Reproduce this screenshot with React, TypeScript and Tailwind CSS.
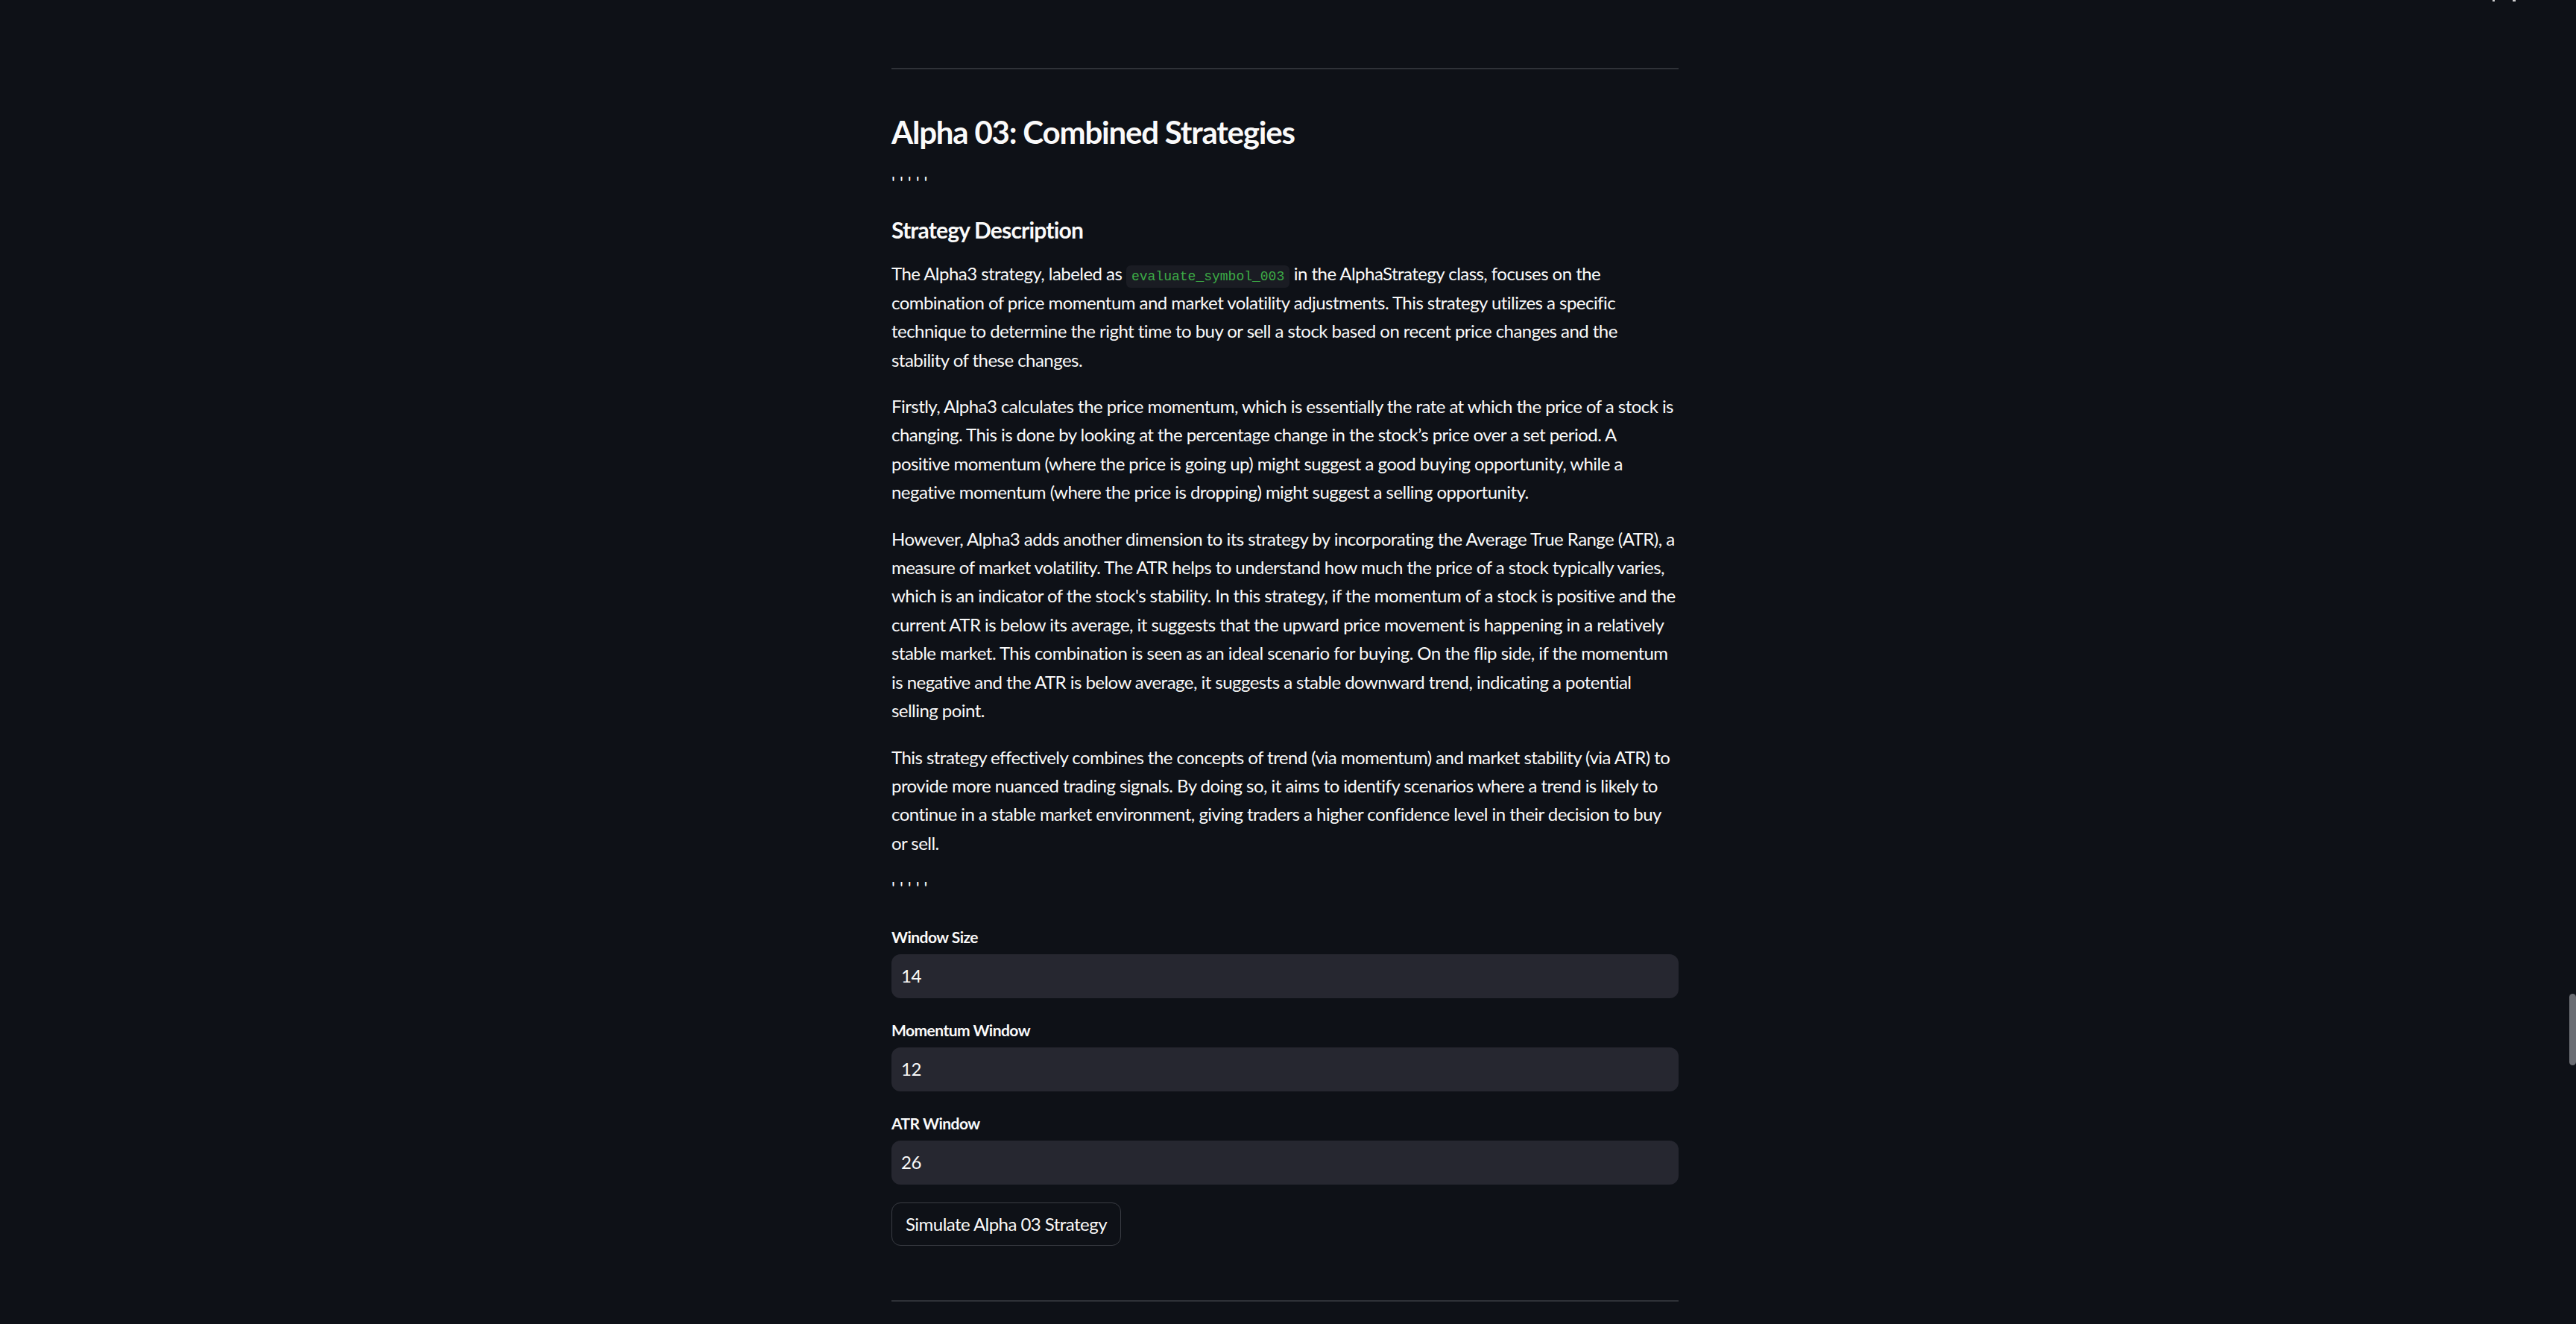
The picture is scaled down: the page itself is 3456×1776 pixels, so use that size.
import React from "react";

const body = "font-['Lato','Noto_Sans',sans-serif] tracking-[-0.54px]";

const Para = ({ lines, className = "" }: { lines: React.ReactNode[]; className?: string }) => (
  <p className={`text-[24px] leading-[38.4px] text-[#fafafa] whitespace-nowrap ${className}`}>
    {lines.map((l, i) => (
      <span key={i} className="block">
        {l}
      </span>
    ))}
  </p>
);

const NumberField = ({ label, value }: { label: string; value: string }) => (
  <div className="flex flex-col">
    <label className="text-[21px] leading-[30px] font-bold text-[#fafafa] mb-[8px]">{label}</label>
    <div className="h-[59px] rounded-[12px] bg-[#262730] flex items-center px-[13px] text-[24px] text-[#fafafa]">
      {value}
    </div>
  </div>
);

// the stray quote marks left in the markdown
const Ticks = () => (
  <p className="text-[24px] leading-[38.4px] text-[#fafafa] tracking-[6px]">'''''</p>
);

export default function App() {
  return (
    <div className={`relative min-h-screen w-full bg-[#0e1117] ${body}`}>
      {/* bits of the toolbar icon cut off at the top */}
      <div className="absolute top-0 left-[3344px] w-[3px] h-[2px] bg-white/80" />
      <div className="absolute top-0 left-[3371px] w-[4px] h-[2px] bg-white/80" />

      {/* scrollbar thumb */}
      <div className="absolute right-0 top-[1333px] w-[9px] h-[96px] rounded-full bg-[#6b6d73]" />

      <div className="flex justify-center pr-[8px]">
        <main className="w-[1056px] flex flex-col">
          <div className="mt-[91px] h-[2px] bg-[#2f3238]" />

          <h2 className="mt-[59px] text-[42px] leading-[50px] font-bold tracking-[-1.2px] text-[#fafafa]">
            Alpha 03: Combined Strategies
          </h2>

          <div className="mt-[24px]">
            <Ticks />
          </div>

          <h4 className="mt-[24px] text-[30px] leading-[40px] font-bold tracking-[-0.8px] text-[#fafafa]">
            Strategy Description
          </h4>

          <div className="mt-[20px] flex flex-col gap-[24px]">
            <Para
              lines={[
                <>
                  The Alpha3 strategy, labeled as{" "}
                  <code className="font-['Liberation_Mono',monospace] text-[18px] leading-[20px] tracking-normal text-[#3dab46] bg-[#1a1c23] rounded-[6px] px-[7px] py-[5px]">
                    evaluate_symbol_003
                  </code>{" "}
                  in the AlphaStrategy class, focuses on the
                </>,
                "combination of price momentum and market volatility adjustments. This strategy utilizes a specific",
                "technique to determine the right time to buy or sell a stock based on recent price changes and the",
                "stability of these changes.",
              ]}
            />
            <Para
              lines={[
                "Firstly, Alpha3 calculates the price momentum, which is essentially the rate at which the price of a stock is",
                "changing. This is done by looking at the percentage change in the stock\u2019s price over a set period. A",
                "positive momentum (where the price is going up) might suggest a good buying opportunity, while a",
                "negative momentum (where the price is dropping) might suggest a selling opportunity.",
              ]}
            />
            <Para
              lines={[
                "However, Alpha3 adds another dimension to its strategy by incorporating the Average True Range (ATR), a",
                "measure of market volatility. The ATR helps to understand how much the price of a stock typically varies,",
                "which is an indicator of the stock's stability. In this strategy, if the momentum of a stock is positive and the",
                "current ATR is below its average, it suggests that the upward price movement is happening in a relatively",
                "stable market. This combination is seen as an ideal scenario for buying. On the flip side, if the momentum",
                "is negative and the ATR is below average, it suggests a stable downward trend, indicating a potential",
                "selling point.",
              ]}
            />
            <Para
              lines={[
                "This strategy effectively combines the concepts of trend (via momentum) and market stability (via ATR) to",
                "provide more nuanced trading signals. By doing so, it aims to identify scenarios where a trend is likely to",
                "continue in a stable market environment, giving traders a higher confidence level in their decision to buy",
                "or sell.",
              ]}
            />
          </div>

          <div className="mt-[22px]">
            <Ticks />
          </div>

          <div className="mt-[31px] flex flex-col gap-[28px]">
            <NumberField label="Window Size" value="14" />
            <NumberField label="Momentum Window" value="12" />
            <NumberField label="ATR Window" value="26" />
          </div>

          <div className="mt-[24px]">
            <button className="h-[58px] px-[18px] rounded-[12px] border border-[#3a3d44] bg-[#0e1117] text-[24px] text-[#fafafa]">
              Simulate Alpha 03 Strategy
            </button>
          </div>

          <div className="mt-[73px] h-[2px] bg-[#2f3238]" />
          <div className="h-[40px]" />
        </main>
      </div>
    </div>
  );
}
